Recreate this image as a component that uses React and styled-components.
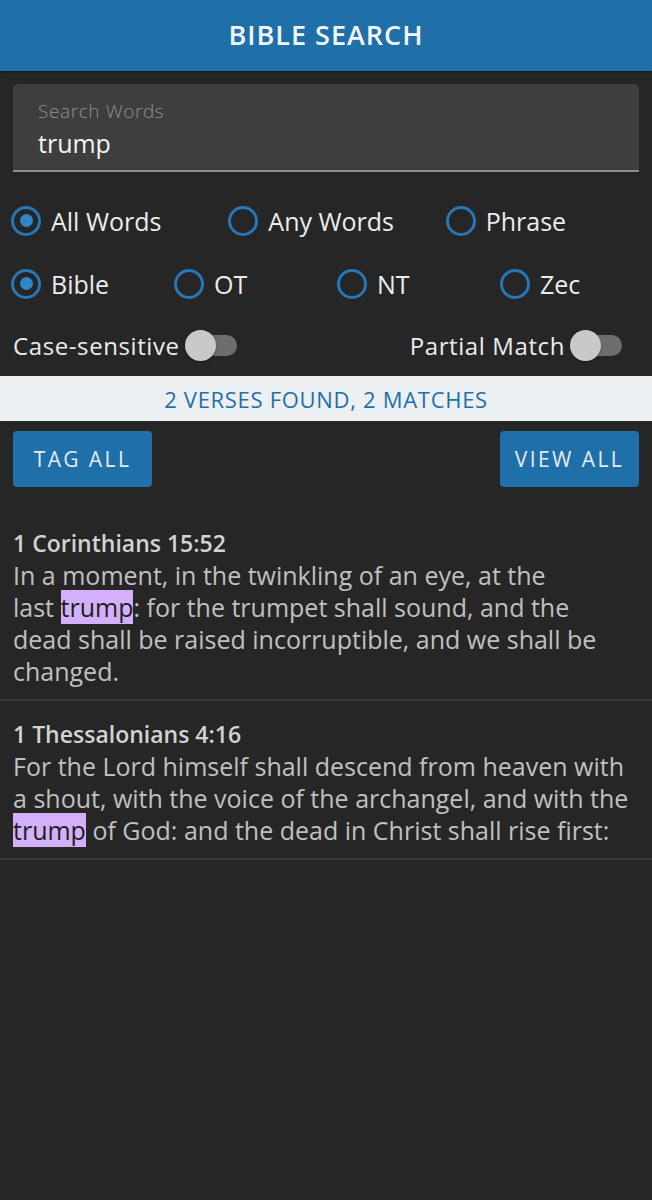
import React from "react";
import styled, { createGlobalStyle } from "styled-components";

const Global = createGlobalStyle`
  html, body { margin: 0; padding: 0; background: #262626; }
  body { font-family: "Open Sans", "Noto Sans", sans-serif; }
  * { box-sizing: border-box; }
`;

const Page = styled.div`
  width: 652px;
  min-height: 1200px;
  background: #262626;
  color: #e6e6e6;
`;

const Header = styled.header`
  height: 71px;
  background: #1f6fa8;
  display: flex;
  align-items: center;
  justify-content: center;
  box-shadow: 0 1px 2px rgba(0,0,0,0.4);
`;

const Title = styled.h1`
  margin: 0 0 2px;
  font-size: 27px;
  font-weight: 600;
  color: #f2f6fa;
  letter-spacing: 1px;
`;

const FieldWrap = styled.div`
  margin: 13px 13px 0;
  height: 88px;
  background: #3e3e3e;
  border-radius: 5px 5px 0 0;
  border-bottom: 2px solid #8c8c8c;
  padding: 13px 25px 0;
  display: flex;
  flex-direction: column;
`;

const FieldLabel = styled.label`
  font-size: 19px;
  font-weight: 300;
  color: #8e8e8e;
  line-height: 28px;
  letter-spacing: 0.6px;
`;

const FieldValue = styled.div`
  font-size: 25px;
  color: #f4f4f4;
  line-height: 36px;
`;

const RadioRow = styled.div`
  display: grid;
  grid-template-columns: repeat(${p => p.$cols}, 1fr);
  height: 63px;
  align-items: center;
  margin-top: ${p => p.$top || 0}px;
`;

const RadioItem = styled.div`
  display: flex;
  align-items: center;
  gap: 10px;
  padding-left: 11px;
  font-size: 25px;
  color: #ececec;
`;

const Circle = styled.span`
  flex: none;
  width: 30px;
  height: 30px;
  border-radius: 50%;
  border: 3.5px solid #2577b6;
  display: flex;
  align-items: center;
  justify-content: center;
  &::after {
    content: "";
    width: 13px;
    height: 13px;
    border-radius: 50%;
    background: ${p => (p.$on ? "#2f86c8" : "transparent")};
  }
`;

const ToggleRow = styled.div`
  display: flex;
  justify-content: space-between;
  align-items: center;
  height: 61px;
  padding: 0 30px 0 13px;
`;

const ToggleItem = styled.div`
  display: flex;
  align-items: center;
  font-size: 24px;
  letter-spacing: 0.6px;
  color: #ececec;
`;

const Switch = styled.span`
  position: relative;
  width: 52px;
  height: 31px;
  margin-left: 5px;
  &::before {
    content: "";
    position: absolute;
    left: 4px;
    right: 0;
    top: 5px;
    height: 21px;
    border-radius: 11px;
    background: #6d6d6d;
  }
  &::after {
    content: "";
    position: absolute;
    left: 0;
    top: 0;
    width: 31px;
    height: 31px;
    border-radius: 50%;
    background: #c9c9c9;
    box-shadow: 0 1px 2px rgba(0,0,0,0.4);
  }
`;

const Banner = styled.div`
  height: 45px;
  background: #edf0f2;
  color: #1f6fa8;
  font-size: 22px;
  letter-spacing: 0.7px;
  display: flex;
  align-items: center;
  justify-content: center;
`;

const ButtonRow = styled.div`
  display: flex;
  justify-content: space-between;
  padding: 10px 13px 0;
`;

const Button = styled.button`
  width: 139px;
  height: 56px;
  border: none;
  border-radius: 4px;
  background: #1f6fa8;
  color: #e4edf5;
  font-family: inherit;
  font-size: 21px;
  letter-spacing: 2.4px;
  padding: 0;
`;

const List = styled.div`
  margin-top: 23px;
`;

const Verse = styled.div`
  padding: 17px 20px 12px 13px;
  border-bottom: 2px solid #3a3a3a;
`;

const Ref = styled.div`
  font-size: 23px;
  font-weight: 600;
  color: #d2d2d2;
  line-height: 32px;
`;

const Body = styled.div`
  font-size: 25px;
  line-height: 32px;
  letter-spacing: 0;
  color: #c0c0c0;
`;

const Hit = styled.mark`
  background: #d5b0fa;
  color: #1e1e1e;
`;

const Keep = styled.span`
  white-space: nowrap;
`;

export default function App() {
  return (
    <Page>
      <Global />
      <Header>
        <Title>BIBLE SEARCH</Title>
      </Header>
      <FieldWrap>
        <FieldLabel>Search Words</FieldLabel>
        <FieldValue>trump</FieldValue>
      </FieldWrap>
      <RadioRow $cols={3} $top={17}>
        <RadioItem><Circle $on />All Words</RadioItem>
        <RadioItem><Circle />Any Words</RadioItem>
        <RadioItem><Circle />Phrase</RadioItem>
      </RadioRow>
      <RadioRow $cols={4}>
        <RadioItem><Circle $on />Bible</RadioItem>
        <RadioItem><Circle />OT</RadioItem>
        <RadioItem><Circle />NT</RadioItem>
        <RadioItem><Circle />Zec</RadioItem>
      </RadioRow>
      <ToggleRow>
        <ToggleItem>Case-sensitive<Switch /></ToggleItem>
        <ToggleItem>Partial Match<Switch /></ToggleItem>
      </ToggleRow>
      <Banner>2 VERSES FOUND, 2 MATCHES</Banner>
      <ButtonRow>
        <Button>TAG ALL</Button>
        <Button>VIEW ALL</Button>
      </ButtonRow>
      <List>
        <Verse>
          <Ref>1 Corinthians 15:52</Ref>
          <Body>
            In a moment, in the twinkling of an eye, at the{" "}
            <Keep>last <Hit>trump</Hit>:</Keep> for the trumpet shall sound, and the dead shall be raised incorruptible, and we shall be changed.
          </Body>
        </Verse>
        <Verse>
          <Ref>1 Thessalonians 4:16</Ref>
          <Body>
            For the Lord himself shall descend from heaven with a shout, with the voice of the archangel, and with the <Hit>trump</Hit> of God: and the dead in Christ shall rise first:
          </Body>
        </Verse>
      </List>
    </Page>
  );
}
